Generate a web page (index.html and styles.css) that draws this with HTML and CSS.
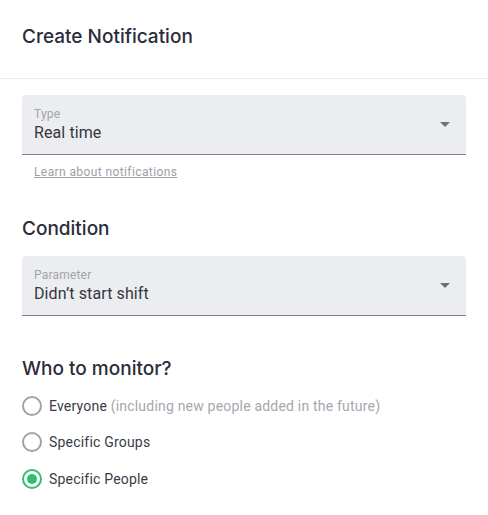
FILE: index.html
```html
<!DOCTYPE html>
<html>

<head>
    <title>Create Notification</title>
    <link rel="stylesheet" href="styles.css">
</head>

<body>
    <div class="header">
        <h1>Create Notification</h1>
    </div>

    <div class="content">
        <div class="field">
            <div class="field-text">
                <span class="field-label">Type</span>
                <span class="field-value">Real time</span>
            </div>
            <span class="caret"></span>
        </div>
        <a class="help-link" href="#">Learn about notifications</a>

        <h2>Condition</h2>
        <div class="field">
            <div class="field-text">
                <span class="field-label">Parameter</span>
                <span class="field-value">Didn’t start shift</span>
            </div>
            <span class="caret"></span>
        </div>

        <h2 class="monitor-title">Who to monitor?</h2>
        <div class="radio-list">
            <label class="radio">
                <span class="radio-circle"></span>
                <span>Everyone <span class="muted">(including new people added in the future)</span></span>
            </label>
            <label class="radio">
                <span class="radio-circle"></span>
                <span>Specific Groups</span>
            </label>
            <label class="radio checked">
                <span class="radio-circle"></span>
                <span>Specific People</span>
            </label>
        </div>
    </div>
</body>

</html>
```

FILE: styles.css
```css
body {
    margin: 0;
    background-color: #ffffff;
    font-family: Roboto, "Liberation Sans", sans-serif;
    color: #2b2d36;
}

.header {
    height: 73px;
    padding: 0 22px 5px 22px;
    border-bottom: 1px solid #ececee;
    display: flex;
    align-items: center;
}

h1 {
    margin: 0;
    font-family: Inter, "Liberation Sans", sans-serif;
    font-size: 19px;
    font-weight: 500;
    color: #2a2c3a;
}

.content {
    padding: 16px 22px 0 22px;
}

.field {
    height: 59px;
    background-color: #ecedf1;
    border-bottom: 1px solid #7d7f86;
    border-radius: 4px 4px 0 0;
    display: flex;
    align-items: center;
    justify-content: space-between;
    padding: 0 15px 0 12px;
}

.field-text {
    display: flex;
    flex-direction: column;
    padding-top: 2px;
}

.field-label {
    font-size: 12px;
    color: #a2a4a9;
    line-height: 14px;
    letter-spacing: 0.2px;
}

.field-value {
    font-size: 16px;
    color: #35373d;
    line-height: 24px;
    letter-spacing: 0.1px;
}

.caret {
    width: 0;
    height: 0;
    border-left: 5px solid transparent;
    border-right: 5px solid transparent;
    border-top: 5px solid #6e7077;
    margin-right: 1px;
}

.help-link {
    display: inline-block;
    margin: 10px 0 0 12px;
    font-size: 12px;
    letter-spacing: 0.4px;
    color: #9ea0a7;
    text-decoration: underline;
}

h2 {
    margin: 0;
    font-family: Inter, "Liberation Sans", sans-serif;
    font-size: 19px;
    font-weight: 500;
    color: #2a2c3a;
    line-height: 24px;
}

.content h2 {
    margin-top: 37px;
    margin-bottom: 15px;
}

.content h2.monitor-title {
    margin-top: 41px;
    margin-bottom: 14px;
}

.radio-list {
    display: flex;
    flex-direction: column;
    gap: 15.5px;
}

.radio {
    display: flex;
    align-items: center;
    gap: 7px;
    font-size: 14px;
    letter-spacing: 0.2px;
    color: #3a3c44;
    height: 21px;
}

.radio-circle {
    width: 16px;
    height: 16px;
    border: 2px solid #a0a2a8;
    border-radius: 50%;
    box-sizing: content-box;
    display: flex;
    align-items: center;
    justify-content: center;
}

.radio.checked .radio-circle {
    border-color: #2dbf6c;
}

.radio.checked .radio-circle::after {
    content: "";
    width: 10px;
    height: 10px;
    border-radius: 50%;
    background-color: #2dbf6c;
}

.muted {
    color: #a5a7ad;
}
```
